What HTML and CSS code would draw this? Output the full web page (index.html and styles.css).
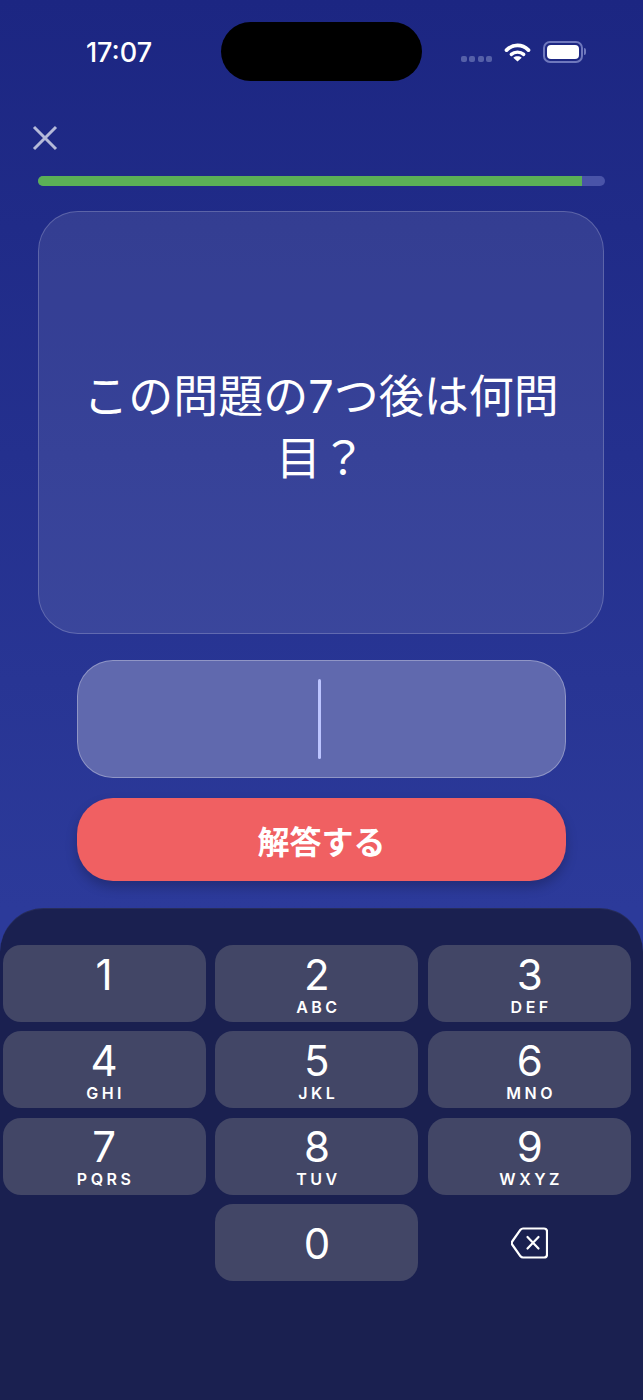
FILE: index.html
```html
<!DOCTYPE html>
<html lang="ja">
<head>
  <meta charset="UTF-8" />
  <meta name="viewport" content="width=device-width, initial-scale=1" />
  <link rel="stylesheet" href="styles.css">
</head>
<body>

  <div class="status-bar">
    <div class="time">17:07</div>
    <div class="island"></div>
    <div class="status-icons">
      <div class="signal"><span></span><span></span><span></span><span></span></div>
      <svg class="wifi" width="27" height="20" viewBox="0 0 28 21">
        <path d="M2.500 8.500 C9 2 19 2 25.500 8.500" fill="none" stroke="#fff" stroke-width="4" stroke-linecap="round" />
        <path d="M7.500 13 C11 9.800 17 9.800 20.500 13" fill="none" stroke="#fff" stroke-width="3.600" stroke-linecap="round" />
        <path d="M14 20.500 L9.600 16.500 C12 14.500 16 14.500 18.400 16.500 Z" fill="#fff" />
      </svg>
      <div class="battery"><div class="battery-fill"></div></div>
      <div class="battery-cap"></div>
    </div>
  </div>

  <div class="close-row">
    <svg width="26" height="26" viewBox="0 0 26 26">
      <path d="M2 2 L24 24 M24 2 L2 24" stroke="#b5bad9" stroke-width="3" fill="none" />
    </svg>
  </div>

  <div class="progress">
    <div class="progress-bar" style="width: 96%"></div>
  </div>

  <div class="question-card">
    <div class="question">この問題の7つ後は何問目？</div>
  </div>

  <div class="answer-box">
    <div class="caret"></div>
  </div>

  <button class="submit" type="button">解答する</button>

  <div class="keyboard">
    <div class="key"><div class="digit">1</div></div>
    <div class="key"><div class="digit">2</div><div class="letters">ABC</div></div>
    <div class="key"><div class="digit">3</div><div class="letters">DEF</div></div>
    <div class="key"><div class="digit">4</div><div class="letters">GHI</div></div>
    <div class="key"><div class="digit">5</div><div class="letters">JKL</div></div>
    <div class="key"><div class="digit">6</div><div class="letters">MNO</div></div>
    <div class="key"><div class="digit">7</div><div class="letters">PQRS</div></div>
    <div class="key"><div class="digit">8</div><div class="letters">TUV</div></div>
    <div class="key"><div class="digit">9</div><div class="letters">WXYZ</div></div>
    <div class="key-empty"></div>
    <div class="key key-zero"><div class="digit">0</div></div>
    <div class="key-empty key-delete">
      <svg width="37" height="32" viewBox="0 0 37 32">
        <path d="M12 1.500 H33 Q36 1.500 36 4.500 V27.500 Q36 30.500 33 30.500 H12 Q10.500 30.500 9.500 29.300 L1.500 18 Q0 16 1.500 14 L9.500 2.700 Q10.500 1.500 12 1.500 Z" fill="none" stroke="#fff" stroke-width="2.200" stroke-linejoin="round" />
        <path d="M16.500 10 L27.500 21.500 M27.500 10 L16.500 21.500" stroke="#fff" stroke-width="2.200" stroke-linecap="round" fill="none" />
      </svg>
    </div>
  </div>

</body>
</html>
```

FILE: styles.css
```css
body {
  margin: 0;
  width: 643px;
  height: 1400px;
  overflow: hidden;
  font-family: Inter, "Noto Sans CJK JP", sans-serif;
  color: white;
  background: linear-gradient(180deg, #1c2682 0, #2c3a9a 908px);
}

.status-bar {
  display: flex;
  align-items: center;
  height: 59px;
  padding-top: 22px;
}

.time {
  width: 221px;
  margin-top: 1px;
  text-align: center;
  font-size: 27px;
  font-weight: 500;
  padding-left: 17px;
  box-sizing: border-box;
}

.island {
  width: 201px;
  height: 59px;
  border-radius: 30px;
  background-color: black;
}

.status-icons {
  display: flex;
  align-items: center;
  margin-left: 39px;
}

.signal {
  display: flex;
  gap: 2.300px;
  margin-top: 15px;
  margin-right: 12px;
}

.signal span {
  width: 6px;
  height: 6px;
  border-radius: 2px;
  background-color: #5560a8;
}

.wifi {
  margin-right: 12px;
}

.battery {
  box-sizing: border-box;
  width: 40px;
  height: 22px;
  padding: 2px;
  border: 2px solid #6f78bd;
  border-radius: 7px;
}

.battery-fill {
  height: 100%;
  border-radius: 4px;
  background-color: white;
}

.battery-cap {
  width: 2px;
  height: 7px;
  margin-left: 1px;
  border-radius: 0 2px 2px 0;
  background-color: #6f78bd;
}

.close-row {
  height: 26px;
  margin-top: 44px;
  padding-left: 32px;
}

.close-row svg {
  display: block;
}

.progress {
  width: 567px;
  height: 10px;
  margin: 25px 0 0 38px;
  border-radius: 6px;
  overflow: hidden;
  background-color: #4a54a8;
}

.progress-bar {
  height: 100%;
  background-color: #5bb056;
}

.question-card {
  box-sizing: border-box;
  display: flex;
  align-items: center;
  justify-content: center;
  width: 566px;
  height: 423px;
  margin: 25px 0 0 38px;
  padding: 0 40px;
  border: 1.500px solid rgba(255,255,255,0.2);
  border-radius: 40px;
  background-color: rgba(255,255,255,0.09);
}

.question {
  text-align: center;
  font-size: 45px;
  line-height: 62px;
  margin-top: 11px;
}

.answer-box {
  box-sizing: border-box;
  display: flex;
  align-items: center;
  justify-content: center;
  width: 489px;
  height: 118px;
  margin: 26px 0 0 77px;
  border: 1.500px solid rgba(255,255,255,0.3);
  border-radius: 36px;
  background-color: #6069ae;
}

.caret {
  width: 3.500px;
  height: 80px;
  margin-right: 4px;
  border-radius: 2px;
  background-color: #bcc4ff;
}

.submit {
  display: block;
  width: 489px;
  height: 83px;
  margin: 20px 0 0 77px;
  border: none;
  border-radius: 36px;
  background-color: #f06062;
  color: white;
  font-family: inherit;
  font-size: 32px;
  font-weight: 700;
  box-shadow: 0 6px 12px rgba(0,0,0,0.22);
}

.keyboard {
  box-sizing: border-box;
  display: grid;
  grid-template-columns: repeat(3, 203px);
  grid-auto-rows: 76.700px;
  column-gap: 9.800px;
  row-gap: 9.800px;
  height: 492px;
  margin-top: 27px;
  padding: 37px 0 0 2.600px;
  border-radius: 44px 44px 0 0;
  background-color: #1a2050;
  box-shadow: inset 0 1px 0 rgba(255,255,255,0.06);
}

.key {
  display: flex;
  flex-direction: column;
  align-items: center;
  border-radius: 18px;
  background-color: #424666;
}

.digit {
  margin-top: 5.500px;
  font-size: 42px;
  line-height: 47px;
}

.letters {
  padding-left: 3px;
  font-size: 16px;
  line-height: 18px;
  font-weight: 600;
  letter-spacing: 3.500px;
}

.key-zero .digit {
  margin-top: 15.500px;
}

.key-delete {
  display: flex;
  align-items: center;
  justify-content: center;
}
```
